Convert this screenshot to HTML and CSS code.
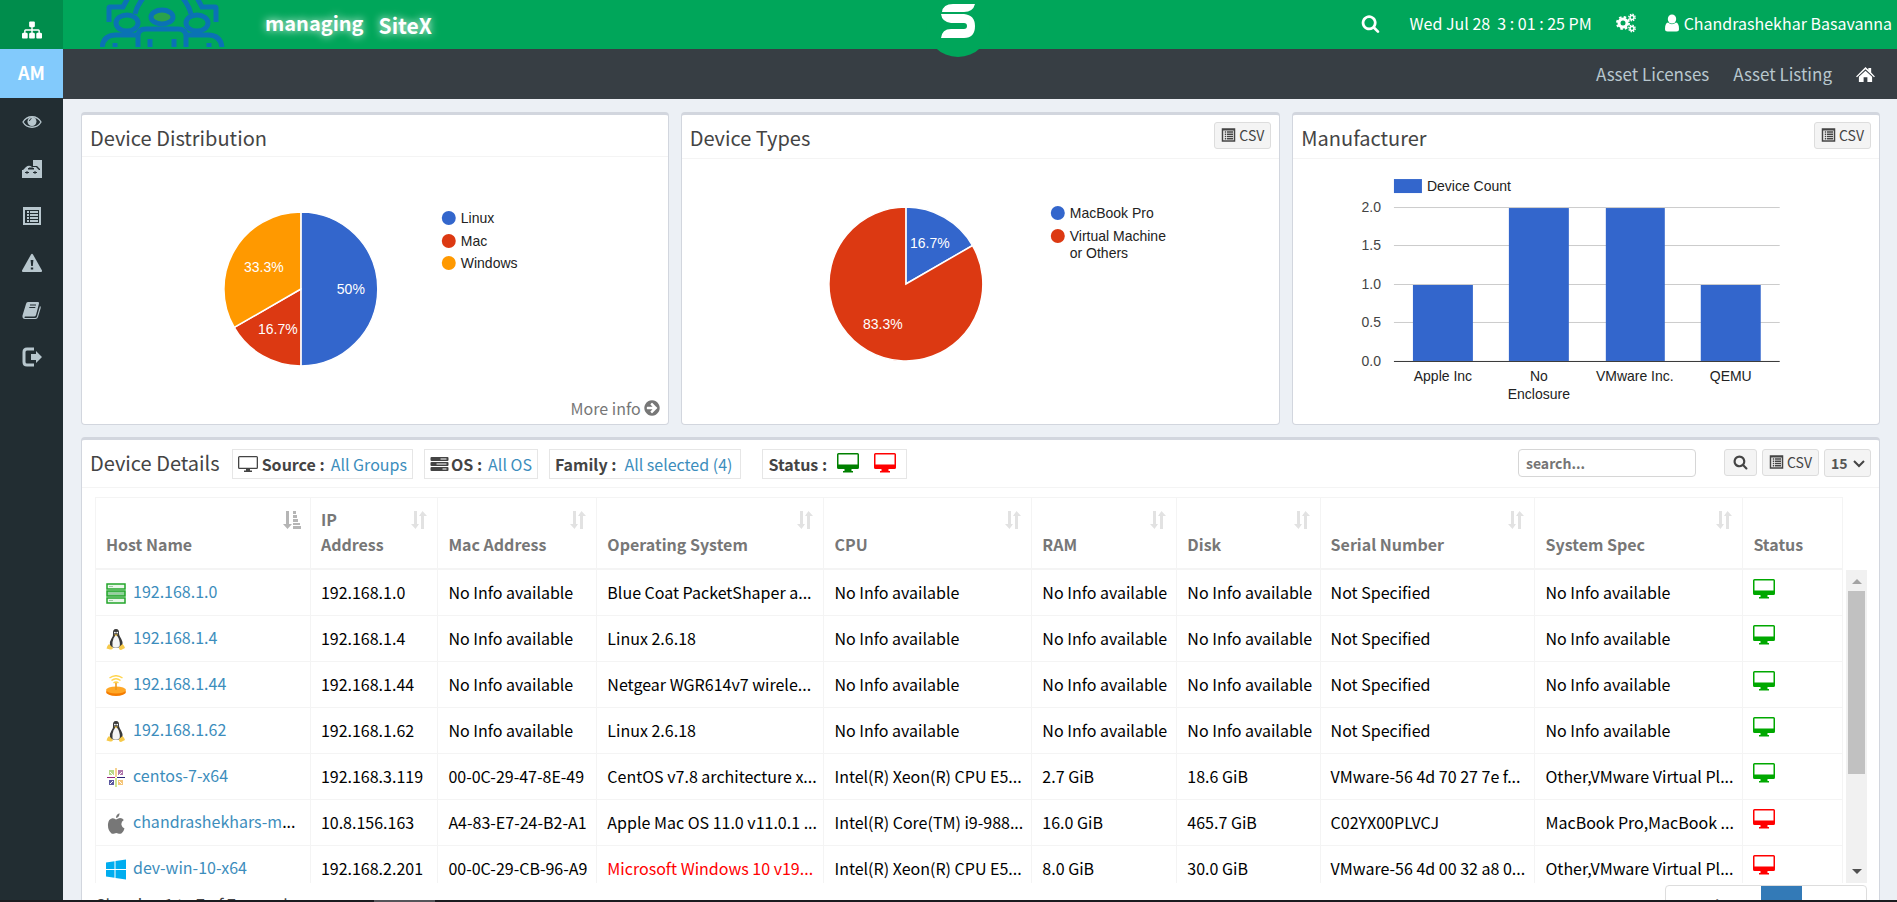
FILE: index.html
```html
<!DOCTYPE html>
<html lang="en">
<head>
  <meta charset="UTF-8" />
  <meta name="viewport" content="width=device-width, initial-scale=1.0" />
  <title>Asset Management</title>
  <link rel="stylesheet" href="styles.css">
</head>
<body>

  <!-- Shared icons -->
  <svg class="sprite" aria-hidden="true">
    <symbol id="i-search" viewBox="0 0 1792 1792"><path d="M1216 832q0-185-131.500-316.500t-316.500-131.500-316.500 131.500-131.500 316.500 131.500 316.500 316.500 131.500 316.500-131.500 131.500-316.500zm512 832q0 52-38 90t-90 38q-54 0-90-38l-343-342q-179 124-399 124-143 0-273.500-55.500t-225-150-150-225-55.500-273.500 55.500-273.500 150-225 225-150 273.500-55.500 273.500 55.500 225 150 150 225 55.500 273.500q0 220-124 399l343 343q37 37 37 90z"/></symbol>
    <symbol id="i-sitemap" viewBox="0 0 1792 1792"><path d="M1792 1248v320q0 40-28 68t-68 28h-320q-40 0-68-28t-28-68v-320q0-40 28-68t68-28h96v-192h-512v192h96q40 0 68 28t28 68v320q0 40-28 68t-68 28h-320q-40 0-68-28t-28-68v-320q0-40 28-68t68-28h96v-192h-512v192h96q40 0 68 28t28 68v320q0 40-28 68t-68 28h-320q-40 0-68-28t-28-68v-320q0-40 28-68t68-28h96v-192q0-52 38-90t90-38h512v-192h-96q-40 0-68-28t-28-68v-320q0-40 28-68t68-28h320q40 0 68 28t28 68v320q0 40-28 68t-68 28h-96v192h512q52 0 90 38t38 90v192h96q40 0 68 28t28 68z"/></symbol>
    <symbol id="i-arrow" viewBox="0 0 1792 1792"><path d="M1413 896q0-27-18-45l-91-91-362-362q-18-18-45-18t-45 18l-91 91q-18 18-18 45t18 45l189 189h-502q-26 0-45 19t-19 45v128q0 26 19 45t45 19h502l-189 189q-19 19-19 45t19 45l91 91q18 18 45 18t45-18l362-362 91-91q18-18 18-45zm251 0q0 209-103 385.500t-279.500 279.500-385.500 103-385.500-103-279.500-279.500-103-385.500 103-385.500 279.500-279.500 385.500-103 385.500 103 279.500 279.500 103 385.500z"/></symbol>
    <symbol id="i-eye" viewBox="0 0 20 20"><path d="M1 10C5 3 15 3 19 10C15 17 5 17 1 10Z" fill="none" stroke="currentColor" stroke-width="1.300"/><circle cx="10" cy="9.500" r="4.500"/><path d="M7.500 9Q7.500 7 9.500 6.600" fill="none" stroke="#222d32"/></symbol>
    <symbol id="i-kit" viewBox="0 0 20 20"><path d="M11 1h9v18h-2V10l-3-3h-4z"/><path d="M0 11h1l3-3q3-2.500 6 0h4l3 3h1v8H0z"/><path d="M6 10l1-1h4l1 1zM3 13.500h4M11 13.500h4M5 12v3M13 12v3" fill="#222d32" stroke="#222d32"/></symbol>
    <symbol id="i-list" viewBox="0 0 20 20"><path fill-rule="evenodd" d="M1 1h18v18H1zM3 4v13h14V4z"/><path d="M5 5h2v2H5zM8 5h8v2H8zM5 8h2v2H5zM8 8h8v2H8zM5 11h2v2H5zM8 11h8v2H8zM5 14h2v2H5zM8 14h8v2H8z"/></symbol>
    <symbol id="i-warn" viewBox="0 0 20 20"><path fill-rule="evenodd" d="M9 1.500q1-1.300 2 0l9 16q.4 1.500-1 1.500H1q-1.400 0-1-1.500zM8.600 7l.6 6h1.600l.6-6zM8.800 14.500v2h2.400v-2z"/></symbol>
    <symbol id="i-book" viewBox="0 0 20 20"><path d="M6 2h10q1.500 0 1 1.500L14 15q-.5 1.500-2 1.500H3q-1.500.5 0 1.500h10q1.600 0 2-1.500L18 6q1 .6.700 2L16 17q-.6 2-2.500 2H3q-3-.3-2.500-3.500L4 4Q4.400 2.200 6 2z"/><path d="M8 5h6M7.300 7.500h6" stroke="#222d32" fill="none"/></symbol>
    <symbol id="i-exit" viewBox="0 0 20 20"><path d="M12 2H5Q2 2 2 5v10q0 3 3 3h7" fill="none" stroke="currentColor" stroke-width="3"/><path d="M9 7h5V4l6 6-6 6v-3H9z"/></symbol>
    <symbol id="i-gears" viewBox="0 0 20 20"><g fill="none" stroke="currentColor"><circle cx="7" cy="10" r="4" stroke-width="3"/><circle cx="7" cy="10" r="6" stroke-width="2" stroke-dasharray="2.500 2.212"/><circle cx="16" cy="4.500" r="2" stroke-width="1.500"/><circle cx="16" cy="4.500" r="3.200" stroke-width="1.400" stroke-dasharray="1.400 1.113"/><circle cx="16" cy="15.500" r="2" stroke-width="1.500"/><circle cx="16" cy="15.500" r="3.200" stroke-width="1.400" stroke-dasharray="1.400 1.113"/></g></symbol>
    <symbol id="i-user" viewBox="0 0 14 18"><path d="M7 0.500a4.200 4.500 0 0 1 0 9a4.200 4.500 0 0 1 0-9z"/><path d="M3 8.500Q7 12 11 8.500Q14 9 14 15q0 2.500-2.500 2.500h-9Q0 17.500 0 15Q0 9 3 8.500z"/></symbol>
    <symbol id="i-home" viewBox="0 0 20 18"><path d="M10 1l3 3V2h3v5l4 4-1 1-9-8.500L1 12l-1-1z"/><path d="M10 5l7 6.500V17h-5v-5H8v5H3v-5.500z"/></symbol>
    <symbol id="i-monitor" viewBox="0 0 22 20"><path fill-rule="evenodd" d="M1.500 0h19Q22 0 22 1.500v13q0 1.500-1.500 1.500h-6v2H16v1.500H6V18h1.500v-2h-6Q0 16 0 14.500v-13Q0 0 1.500 0zM1.500 1.500v10h19v-10z"/></symbol>
    <symbol id="i-screen" viewBox="0 0 20 18"><path fill-rule="evenodd" d="M1.500 1h17q1.500 0 1.500 1.500v10q0 1.500-1.500 1.500H12v1.500h2V17H6v-1.500h2V14H1.500Q0 14 0 12.500v-10Q0 1 1.500 1zM1.300 2.300v10.400h17.400V2.300z"/></symbol>
    <symbol id="i-server" viewBox="0 0 18 16"><rect y="1" width="18" height="4" rx="1"/><rect y="6" width="18" height="4" rx="1"/><rect y="11" width="18" height="4" rx="1"/><path d="M10 3h6M6 8h10M12 13h4" stroke="#fff"/></symbol>
    <symbol id="i-sort" viewBox="0 0 18 18"><path d="M4 0h3v13h2l-3.500 5L1 13h3zM11 18h3V5h3l-4.500-5L9 5h2z"/></symbol>
    <symbol id="i-sorted" viewBox="0 0 18 18"><path d="M3 0h3v13h3l-4.500 5L0 13h3zM10 0h3v3h-3zM10 4h4v3h-4zM10 8h5v3h-5zM10 12h7v2h-7zM10 15h8v3h-8z"/></symbol>
    <symbol id="i-rack" viewBox="0 0 20 21"><g fill="#e9f7ea" stroke="#22a52a" stroke-width="1.500"><rect x="1" y="1" width="18" height="5"/><rect x="1" y="8" width="18" height="5" fill="#8fd39a"/><rect x="1" y="15" width="18" height="5"/></g><path d="M3 3.500h4M3 10.500h12M3 17.500h4" stroke="#9fc9a5"/></symbol>
    <symbol id="i-tux" viewBox="0 0 20 21"><path d="M10 0q3.500 0 3 5 .3 2 2.300 5t1.200 7q-1 2-2.500 1.500H7q-2.500 0-3-2Q3.500 12 5.500 9.500T7 5Q6.500 0 10 0z" fill="#3a3a3a"/><path d="M9.500 6q2 .5 3 3 2 5 1 8.500-4 2-7 0-.5-5 1-8z" fill="#f5f5f5"/><circle cx="8.900" cy="3.600" r=".9" fill="#fff"/><circle cx="11.200" cy="3.600" r=".9" fill="#fff"/><path d="M8 5.500h4l-2 1.700zM3 15l4 4q-.5 2-3 1.500l-3.500-1q.5-3 2.500-4.500zM16.500 15q2 2 2.500 4l-4 2q-2.500 0-2-3z" fill="#f6c94a"/></symbol>
    <symbol id="i-router" viewBox="0 0 20 21"><ellipse cx="10" cy="17" rx="10" ry="4" fill="#f57c00"/><ellipse cx="10" cy="15" rx="10" ry="3.500" fill="#ffa726"/><path d="M9.200 7h1.600v8H9.200z" fill="#ef9a1a"/><path d="M3.500 3Q10-1.500 16.500 3M5.500 5.500Q10 2 14.500 5.500M7.500 8Q10 6 12.500 8" fill="none" stroke="#ffd54f" stroke-width="1.500"/></symbol>
    <symbol id="i-centos" viewBox="0 0 20 21"><path d="M3 3h5v5H3z" fill="#b9d98a"/><path d="M12 3h5v5h-5z" fill="#b078ad"/><path d="M3 13h5v5H3z" fill="#5b5aa0"/><path d="M12 13h5v5h-5z" fill="#f5c67a"/><path d="M4 5l3 3M16 5l-3 3M4 17l3-3M16 17l-3-3" stroke="#fff"/><path d="M9.500 1h1v9h-1z" fill="#efa724"/><path d="M11 10h8v1h-8z" fill="#262577"/><path d="M9.500 11h1v9h-1z" fill="#9ccd2a"/><path d="M1 10h8v1H1z" fill="#932279"/></symbol>
    <symbol id="i-apple" viewBox="0 0 20 21"><path d="M10 6.500q2.500-1.500 4-1.500 2.500.1 3.800 2-3 2-2.300 5 .5 2.600 3 3.500Q17 20 14.500 20.800q-1.500.2-2.500-.4-1.700-.6-3.500 0Q7 21.200 5.500 20.500 1.500 17 2 11 2.500 6 6.300 5.200 7.500 5 10 6.500zM10 5Q10 1.500 13.500.300 13.700 4 10 5z" fill="#777"/></symbol>
    <symbol id="i-windows" viewBox="0 0 20 21"><path d="M0 3.500l8.500-1.200V10H0zM9.500 2L20 .5V10H9.500zM0 11h8.500v7.700L0 17.500zM9.500 11H20v9.500L9.500 19z" fill="#00adef"/></symbol>
  </svg>

  <div class="app">
    <aside class="sidebar">
      <a href="#" class="side-logo" aria-label="Sites"><svg class="icon"><use href="#i-sitemap"/></svg></a>
      <a href="#" class="side-module">AM</a>
      <nav class="side-menu">
        <a href="#" aria-label="Overview"><svg class="icon"><use href="#i-eye"/></svg></a>
        <a href="#" aria-label="Inventory"><svg class="icon"><use href="#i-kit"/></svg></a>
        <a href="#" aria-label="Reports"><svg class="icon"><use href="#i-list"/></svg></a>
        <a href="#" aria-label="Alerts"><svg class="icon"><use href="#i-warn"/></svg></a>
        <a href="#" aria-label="Guide"><svg class="icon"><use href="#i-book"/></svg></a>
        <a href="#" aria-label="Sign out"><svg class="icon"><use href="#i-exit"/></svg></a>
      </nav>
    </aside>

    <div class="main">
      <header class="topbar">
        <svg class="team" viewBox="0 0 126 47" aria-hidden="true">
          <g fill="none" stroke="#0a72b5" stroke-width="5">
            <path d="M35 14Q38 2 49-8h28Q88 2 91 14" />
            <path d="M9 22V8q0-1 1-1h13L29-4M116 22V8q0-1-1-1h-13L96-4" />
            <ellipse cx="62" cy="17" rx="11" ry="7" fill="#2ba24a" />
            <ellipse cx="27" cy="23" rx="11" ry="8" />
            <ellipse cx="97" cy="23" rx="11" ry="8" />
            <path d="M38 48V36q0-7 8-7h32q8 0 8 7v12" />
            <path d="M2 48q1-13 14-13h22M122 48q-1-13-14-13H86M50 39v9M74 39v9M15 43v5M109 43v5" />
          </g>
        </svg>
        <span class="managing">managing</span>
        <span class="site">SiteX</span>
        <div class="brand">
          <svg viewBox="0 0 34 34" aria-hidden="true"><path d="M12 0H34Q32 8 23 8H1Q2 0 12 0zM0 10H23Q34 11 34 22Q34 34 23 34H0Q1 25 10 25H23Q26 25 26 22T23 19H10Q1 18 0 10z" fill="#fff"/></svg>
        </div>
        <div class="topbar-right">
          <button class="icon-btn" aria-label="Search"><svg class="icon"><use href="#i-search"/></svg></button>
          <span class="clock">Wed Jul 28 &nbsp;3 : 01 : 25 PM</span>
          <button class="icon-btn" aria-label="Settings"><svg class="icon gears"><use href="#i-gears"/></svg></button>
          <a href="#" class="user"><svg class="icon"><use href="#i-user"/></svg>Chandrashekhar Basavanna</a>
        </div>
      </header>

      <nav class="subnav">
        <a href="#">Asset Licenses</a>
        <a href="#">Asset Listing</a>
        <a href="#" class="home" aria-label="Home"><svg class="icon"><use href="#i-home"/></svg></a>
      </nav>

      <main class="content">
        <div class="charts">
          <section class="card">
            <div class="card-header short"><h2>Device Distribution</h2></div>
            <svg class="chart" viewBox="0 0 586 246">
              <g stroke="#fff" stroke-width="1.500">
                <path d="M219 132V55A77 77 0 0 1 219 209Z" fill="#3366cc" />
                <path d="M219 132V209A77 77 0 0 1 152.300 170.500Z" fill="#dc3912" />
                <path d="M219 132L152.300 170.500A77 77 0 0 1 219 55Z" fill="#ff9900" />
              </g>
              <g class="pie-label">
                <text x="269" y="137">50%</text>
                <text x="196" y="177">16.7%</text>
                <text x="182" y="115">33.3%</text>
              </g>
              <circle cx="367" cy="61" r="7" fill="#3366cc" /><text x="379" y="66">Linux</text>
              <circle cx="367" cy="84" r="7" fill="#dc3912" /><text x="379" y="89">Mac</text>
              <circle cx="367" cy="106" r="7" fill="#ff9900" /><text x="379" y="111">Windows</text>
            </svg>
            <a href="#" class="more">More info <svg class="icon"><use href="#i-arrow"/></svg></a>
          </section>

          <section class="card">
            <div class="card-header">
              <h2>Device Types</h2>
              <button class="btn"><svg class="icon"><use href="#i-list"/></svg>CSV</button>
            </div>
            <svg class="chart" viewBox="0 0 598 246">
              <g stroke="#fff" stroke-width="1.500">
                <path d="M224 125V48A77 77 0 0 1 290.700 86.500Z" fill="#3366cc" />
                <path d="M224 125L290.700 86.500A77 77 0 1 1 224 48Z" fill="#dc3912" />
              </g>
              <g class="pie-label">
                <text x="248" y="89">16.7%</text>
                <text x="201" y="170">83.3%</text>
              </g>
              <circle cx="376" cy="54" r="7" fill="#3366cc" /><text x="388" y="59">MacBook Pro</text>
              <circle cx="376" cy="77" r="7" fill="#dc3912" /><text x="388" y="82">Virtual Machine</text>
              <text x="388" y="99">or Others</text>
            </svg>
          </section>

          <section class="card">
            <div class="card-header">
              <h2>Manufacturer</h2>
              <button class="btn"><svg class="icon"><use href="#i-list"/></svg>CSV</button>
            </div>
            <svg class="chart" viewBox="0 0 586 246">
              <rect x="101" y="20" width="28" height="14" fill="#3366cc" />
              <text x="134" y="32">Device Count</text>
              <path d="M101 48.500H487M101 86.500H487M101 125.500H487M101 163.500H487" stroke="#ccc" />
              <g fill="#3366cc">
                <rect x="120" y="126" width="60" height="76" />
                <rect x="216" y="49" width="60" height="153" />
                <rect x="313" y="49" width="59" height="153" />
                <rect x="408" y="126" width="60" height="76" />
              </g>
              <path d="M101 202.500H487" stroke="#333" />
              <g class="axis-y">
                <text x="88" y="53">2.0</text>
                <text x="88" y="91">1.5</text>
                <text x="88" y="130">1.0</text>
                <text x="88" y="168">0.5</text>
                <text x="88" y="207">0.0</text>
              </g>
              <g class="axis-x">
                <text x="150" y="222">Apple Inc</text>
                <text x="246" y="222">No</text>
                <text x="246" y="240">Enclosure</text>
                <text x="342" y="222">VMware Inc.</text>
                <text x="438" y="222">QEMU</text>
              </g>
            </svg>
          </section>
        </div>

        <section class="card details">
          <div class="filters">
            <h2>Device Details</h2>
            <div class="filter"><svg class="icon screen"><use href="#i-screen"/></svg><b>Source :</b><a href="#">All Groups</a></div>
            <div class="filter"><svg class="icon server"><use href="#i-server"/></svg><b>OS :</b><a href="#">All OS</a></div>
            <div class="filter family"><b>Family :</b><a href="#">All selected (4)</a></div>
            <div class="filter status"><b>Status :</b><svg class="icon monitor up"><use href="#i-monitor"/></svg><svg class="icon monitor down"><use href="#i-monitor"/></svg></div>
            <input type="text" class="search" placeholder="search..." aria-label="Search devices" />
            <button class="btn find" aria-label="Find"><svg class="icon"><use href="#i-search"/></svg></button>
            <button class="btn"><svg class="icon"><use href="#i-list"/></svg>CSV</button>
            <div class="page-size">
              <select aria-label="Rows per page"><option>15</option></select>
              <svg viewBox="0 0 12 8" aria-hidden="true"><path d="M1 1l5 5 5-5" fill="none" stroke="#444" stroke-width="2"/></svg>
            </div>
          </div>

          <div class="table-pane">
            <table>
              <colgroup>
                <col class="c-host"><col class="c-ip"><col class="c-mac"><col class="c-os"><col class="c-cpu">
                <col class="c-ram"><col class="c-disk"><col class="c-serial"><col class="c-spec"><col class="c-status">
              </colgroup>
              <thead>
                <tr>
                  <th><svg class="icon sort on"><use href="#i-sorted"/></svg>Host Name</th>
                  <th><svg class="icon sort"><use href="#i-sort"/></svg>IP<br>Address</th>
                  <th><svg class="icon sort"><use href="#i-sort"/></svg>Mac Address</th>
                  <th><svg class="icon sort"><use href="#i-sort"/></svg>Operating System</th>
                  <th><svg class="icon sort"><use href="#i-sort"/></svg>CPU</th>
                  <th><svg class="icon sort"><use href="#i-sort"/></svg>RAM</th>
                  <th><svg class="icon sort"><use href="#i-sort"/></svg>Disk</th>
                  <th><svg class="icon sort"><use href="#i-sort"/></svg>Serial Number</th>
                  <th><svg class="icon sort"><use href="#i-sort"/></svg>System Spec</th>
                  <th>Status</th>
                </tr>
              </thead>
              <tbody>
                <tr>
                  <td><svg class="os"><use href="#i-rack"/></svg><a href="#">192.168.1.0</a></td>
                  <td>192.168.1.0</td>
                  <td>No Info available</td>
                  <td>Blue Coat PacketShaper a...</td>
                  <td>No Info available</td>
                  <td>No Info available</td>
                  <td>No Info available</td>
                  <td>Not Specified</td>
                  <td>No Info available</td>
                  <td><svg class="icon monitor up"><use href="#i-monitor"/></svg></td>
                </tr>
                <tr>
                  <td><svg class="os"><use href="#i-tux"/></svg><a href="#">192.168.1.4</a></td>
                  <td>192.168.1.4</td>
                  <td>No Info available</td>
                  <td>Linux 2.6.18</td>
                  <td>No Info available</td>
                  <td>No Info available</td>
                  <td>No Info available</td>
                  <td>Not Specified</td>
                  <td>No Info available</td>
                  <td><svg class="icon monitor up"><use href="#i-monitor"/></svg></td>
                </tr>
                <tr>
                  <td><svg class="os"><use href="#i-router"/></svg><a href="#">192.168.1.44</a></td>
                  <td>192.168.1.44</td>
                  <td>No Info available</td>
                  <td>Netgear WGR614v7 wirele...</td>
                  <td>No Info available</td>
                  <td>No Info available</td>
                  <td>No Info available</td>
                  <td>Not Specified</td>
                  <td>No Info available</td>
                  <td><svg class="icon monitor up"><use href="#i-monitor"/></svg></td>
                </tr>
                <tr>
                  <td><svg class="os"><use href="#i-tux"/></svg><a href="#">192.168.1.62</a></td>
                  <td>192.168.1.62</td>
                  <td>No Info available</td>
                  <td>Linux 2.6.18</td>
                  <td>No Info available</td>
                  <td>No Info available</td>
                  <td>No Info available</td>
                  <td>Not Specified</td>
                  <td>No Info available</td>
                  <td><svg class="icon monitor up"><use href="#i-monitor"/></svg></td>
                </tr>
                <tr>
                  <td><svg class="os"><use href="#i-centos"/></svg><a href="#">centos-7-x64</a></td>
                  <td>192.168.3.119</td>
                  <td>00-0C-29-47-8E-49</td>
                  <td>CentOS v7.8 architecture x...</td>
                  <td>Intel(R) Xeon(R) CPU E5...</td>
                  <td>2.7 GiB</td>
                  <td>18.6 GiB</td>
                  <td>VMware-56 4d 70 27 7e f...</td>
                  <td>Other,VMware Virtual Pl...</td>
                  <td><svg class="icon monitor up"><use href="#i-monitor"/></svg></td>
                </tr>
                <tr>
                  <td><svg class="os"><use href="#i-apple"/></svg><a href="#">chandrashekhars-m</a>...</td>
                  <td>10.8.156.163</td>
                  <td>A4-83-E7-24-B2-A1</td>
                  <td>Apple Mac OS 11.0 v11.0.1 ...</td>
                  <td>Intel(R) Core(TM) i9-988...</td>
                  <td>16.0 GiB</td>
                  <td>465.7 GiB</td>
                  <td>C02YX00PLVCJ</td>
                  <td>MacBook Pro,MacBook ...</td>
                  <td><svg class="icon monitor down"><use href="#i-monitor"/></svg></td>
                </tr>
                <tr>
                  <td><svg class="os"><use href="#i-windows"/></svg><a href="#">dev-win-10-x64</a></td>
                  <td>192.168.2.201</td>
                  <td>00-0C-29-CB-96-A9</td>
                  <td class="alert">Microsoft Windows 10 v19...</td>
                  <td>Intel(R) Xeon(R) CPU E5...</td>
                  <td>8.0 GiB</td>
                  <td>30.0 GiB</td>
                  <td>VMware-56 4d 00 32 a8 0...</td>
                  <td>Other,VMware Virtual Pl...</td>
                  <td><svg class="icon monitor down"><use href="#i-monitor"/></svg></td>
                </tr>
              </tbody>
            </table>
            <div class="scrollbar" aria-hidden="true">
              <svg viewBox="0 0 10 6"><path d="M0 6l5-5 5 5z" fill="#a3a3a3"/></svg>
              <div class="thumb"></div>
              <svg viewBox="0 0 10 6"><path d="M0 0l5 5 5-5z" fill="#505050"/></svg>
            </div>
          </div>

          <div class="table-footer">
            <span>Showing 1 to 7 of 7 records</span>
            <div class="pager">
              <a href="#">Previous</a><a href="#" class="current">1</a><a href="#">Next</a>
            </div>
          </div>
        </section>
      </main>
    </div>
    <div class="bottom-bar"><span></span></div>
  </div>

</body>
</html>
```
FILE: styles.css
```css
* {
  box-sizing: border-box;
}

body {
  margin: 0;
  font-family: "Source Sans Pro", "Noto Sans CJK SC", sans-serif;
  font-size: 16px;
  line-height: 24px;
  color: #444;
  background: #ecf0f5;
}

a {
  color: #3c8dbc;
  text-decoration: none;
}

h2 {
  margin: 0;
  font-size: 20px;
  font-weight: 400;
  line-height: 24px;
  white-space: nowrap;
}

button,
input,
select {
  font-family: inherit;
}

.sprite {
  display: none;
}

.icon {
  width: 20px;
  height: 20px;
  fill: currentColor;
  flex: none;
}

.app {
  display: flex;
  height: 100vh;
  overflow: hidden;
}

/* Sidebar */
.sidebar {
  width: 63px;
  flex: none;
  background: #222d32;
}

.sidebar a {
  display: flex;
  align-items: center;
  justify-content: center;
  height: 49px;
}

.sidebar .side-logo {
  padding-top: 10px;
  color: #fff;
  background: #008d4c;
}

.sidebar .side-module {
  padding-bottom: 3px;
  color: #fff;
  background: #82cafc;
  font-size: 18px;
  font-weight: 700;
}

.sidebar .side-menu a {
  height: 47px;
  color: #b8c7ce;
}

/* Top bars */
.main {
  flex: 1;
  min-width: 0;
}

.topbar {
  position: relative;
  display: flex;
  align-items: center;
  height: 49px;
  padding-right: 5px;
  color: #fff;
  background: #00a65a;
}

.team {
  width: 126px;
  height: 47px;
  margin: 0 39px 2px 37px;
}

.managing,
.site {
  font-size: 20px;
  font-weight: 700;
  text-shadow: 0 0 8px #fff;
}

.site {
  font-size: 21px;
}

.managing {
  margin: 0 15px 3px 0;
}

.brand {
  position: absolute;
  left: 49%;
  top: -6px;
  display: flex;
  align-items: center;
  justify-content: center;
  width: 64px;
  height: 63px;
  margin-left: -36px;
  padding-bottom: 10px;
  border-radius: 50%;
  background: #00a65a;
}

.brand svg {
  width: 34px;
  height: 34px;
}

.topbar-right {
  display: flex;
  align-items: center;
  margin-left: auto;
  padding-bottom: 3px;
}

.icon-btn {
  display: flex;
  padding: 0;
  border: 0;
  color: #fff;
  background: none;
  cursor: pointer;
}

.icon-btn .icon {
  width: 19px;
  height: 19px;
}

.icon-btn .gears {
  width: 20px;
  height: 20px;
}

.clock {
  margin: 0 24px 0 30px;
}

.user {
  display: flex;
  align-items: center;
  gap: 5px;
  margin-left: 29px;
  color: #fff;
}

.user .icon {
  width: 14px;
  height: 18px;
}

.subnav {
  display: flex;
  align-items: center;
  justify-content: flex-end;
  gap: 24px;
  height: 50px;
  padding-right: 22px;
  background: #373e44;
}

.subnav a {
  color: #b8c7ce;
  font-size: 17px;
}

.subnav .home {
  display: flex;
  color: #fff;
}

.subnav .home .icon {
  width: 19px;
  height: 17px;
}

/* Cards */
.content {
  padding: 13px 17px 0 18px;
}

.charts {
  display: grid;
  grid-template-columns: 49fr 50fr 49fr;
  gap: 12px;
}

.card {
  display: flex;
  flex-direction: column;
  min-width: 0;
  height: 313px;
  border: 1px solid #d2d6de;
  border-top-width: 3px;
  border-radius: 4px;
  background: #fff;
}

.card-header {
  display: flex;
  align-items: center;
  justify-content: space-between;
  height: 44px;
  padding: 2px 8px 0;
  border-bottom: 1px solid #f4f4f4;
}

.card-header.short {
  height: 42px;
  padding-top: 5px;
}

.btn {
  display: flex;
  align-items: center;
  justify-content: center;
  gap: 3px;
  width: 57px;
  height: 27px;
  padding: 0 0 1px;
  border: 1px solid #ddd;
  border-radius: 3px;
  color: #444;
  background: #f4f4f4;
  font-size: 14px;
  line-height: 20px;
  cursor: pointer;
}

.btn .icon {
  width: 15px;
  height: 16px;
}

.card-header .btn {
  margin-bottom: 5px;
}

.chart {
  width: 100%;
  height: 246px;
  flex: none;
  font-family: "Liberation Sans", Arial, sans-serif;
  font-size: 14px;
  fill: #222;
}

.pie-label {
  fill: #fff;
  text-anchor: middle;
}

.axis-y {
  fill: #444;
  text-anchor: end;
}

.axis-x {
  text-anchor: middle;
}

.more {
  display: flex;
  align-items: center;
  justify-content: flex-end;
  gap: 2px;
  margin-top: -7px;
  padding-right: 7px;
  color: #777;
}

.more .icon {
  width: 18px;
  height: 18px;
}

/* Device details */
.details {
  height: auto;
  margin-top: 12px;
}

.filters {
  display: flex;
  align-items: flex-start;
  height: 48px;
  padding: 9px 8px 0;
  border-bottom: 1px solid #f4f4f4;
}

.filters h2 {
  margin: 2px 12px 0 0;
}

.filter {
  display: flex;
  align-items: center;
  height: 30px;
  margin-right: 11px;
  padding: 0 5px 1px;
  border: 1px solid #e6e6e6;
  white-space: nowrap;
}

.filter a {
  margin-left: 6px;
}

.filter .screen {
  height: 18px;
  margin-right: 4px;
}

.filter .server {
  width: 19px;
  height: 16px;
  margin-right: 2px;
}

.filter.family {
  margin-right: 21px;
  padding-right: 8px;
}

.filter.family a {
  margin-left: 8px;
}

.monitor {
  width: 22px;
  height: 20px;
}

.up {
  color: #00a800;
}

.down {
  color: #ff0000;
}

.filter.status .monitor {
  margin: 0 5px 2px 10px;
}

.filter.status .up {
  color: #008000;
}

.search {
  width: 178px;
  height: 28px;
  margin: 0 28px 0 auto;
  padding: 0 7px;
  border: 1px solid #d6d6d6;
  border-radius: 4px;
  font-size: 14px;
  font-weight: 700;
}

.search::placeholder {
  color: #757575;
}

.btn.find {
  width: 33px;
  margin-right: 5px;
}

.page-size {
  position: relative;
  margin-left: 5px;
}

.page-size select {
  width: 47px;
  height: 28px;
  padding: 0 6px;
  border: 1px solid #ddd;
  border-radius: 3px;
  color: #555;
  background: #f4f4f4;
  font-size: 14px;
  font-weight: 700;
  appearance: none;
}

.page-size svg {
  position: absolute;
  right: 6px;
  top: 11px;
  width: 12px;
  height: 8px;
  pointer-events: none;
}

/* Table */
.table-pane {
  display: flex;
  height: 386px;
  margin: 9px 12px 0 13px;
  overflow: hidden;
}

table {
  width: 100%;
  height: max-content;
  min-width: 0;
  table-layout: fixed;
  border-collapse: separate;
  border-spacing: 0;
  border-top: 1px solid #f4f4f4;
  border-left: 1px solid #f4f4f4;
}

.c-host { width: 12.300%; }
.c-ip { width: 7.300%; }
.c-mac { width: 9.100%; }
.c-os { width: 13%; }
.c-cpu { width: 11.900%; }
.c-ram { width: 8.300%; }
.c-disk { width: 8.200%; }
.c-serial { width: 12.300%; }
.c-spec { width: 11.900%; }
.c-status { width: 5.700%; }

th,
td {
  padding: 0 10px 2px;
  border-right: 1px solid #f4f4f4;
  border-bottom: 1px solid #f4f4f4;
  text-align: left;
  white-space: nowrap;
}

th {
  position: relative;
  height: 72px;
  padding-bottom: 11px;
  border-bottom-width: 2px;
  color: #777;
  line-height: 25px;
  vertical-align: bottom;
}

td {
  height: 46px;
  color: #000;
}

.sort {
  position: absolute;
  top: 13px;
  right: 9px;
  width: 18px;
  height: 18px;
  color: #e2e2e2;
}

.sort.on {
  color: #b5b5b5;
}

td .os {
  width: 20px;
  height: 21px;
  margin-right: 7px;
  vertical-align: middle;
}

td .monitor {
  display: block;
  margin-bottom: 6px;
}

.alert {
  color: #ff0000;
}

.scrollbar {
  display: flex;
  flex: none;
  flex-direction: column;
  align-items: center;
  width: 21px;
  margin: 73px 0 0 3px;
  padding: 8px 0;
  background: #f1f1f1;
}

.scrollbar svg {
  width: 10px;
  height: 6px;
}

.thumb {
  width: 17px;
  height: 183px;
  margin: 7px 0 auto;
  background: #c1c1c1;
}

.table-footer {
  display: flex;
  justify-content: space-between;
  padding: 2px 12px 16px 14px;
}

.table-footer span {
  padding-top: 7px;
}

.pager {
  display: flex;
  border: 1px solid #ddd;
  border-radius: 4px;
}

.pager a {
  padding: 7px 15px;
  color: #777;
}

.pager .current {
  padding: 7px 16px;
  color: #fff;
  background: #337ab7;
}

.bottom-bar {
  position: fixed;
  left: 0;
  right: 0;
  bottom: 0;
  height: 2px;
  background: #1b1b1f;
}

.bottom-bar span {
  display: block;
  width: 61px;
  height: 2px;
  margin-left: 374px;
  background: #55555a;
}
```
